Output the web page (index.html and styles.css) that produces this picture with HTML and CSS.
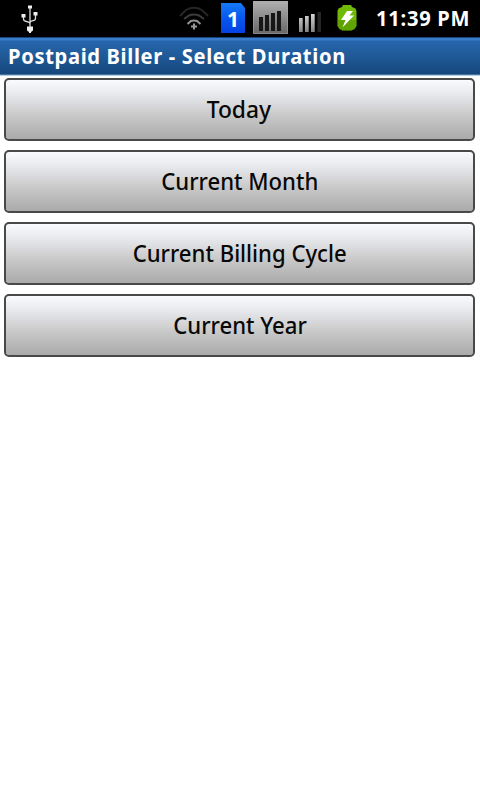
FILE: index.html
```html
<!DOCTYPE html>
<html lang="en">
<head>
<meta charset="utf-8">
<title>Postpaid Biller</title>
<link rel="stylesheet" href="styles.css">
</head>
<body>
<header class="status">
  <svg class="usb" width="18" height="28" viewBox="0 0 18 28" fill="none" stroke="#ddd" stroke-width="1.3">
    <path d="M9 2v24M2.500 11v3q0 2 3 2.500t3.500 2M14.500 9v4.200q0 2-2.500 2.500T9 17.500"/>
    <path fill="#eee" stroke="none" d="M7 .5h4v3H7zM.5 9h4v3.500h-4zM12.500 7h4v3.500h-4zM6 21.500h6v4l-2 1.500v1H8v-1l-2-1.500z"/>
  </svg>
  <svg class="wifi" width="32" height="24" viewBox="0 0 32 24" fill="none" stroke-width="2">
    <path stroke="#262626" d="M1 10L7 4Q15-.5 23 4L29 10"/>
    <path stroke="#3c3c3c" d="M5 13L10 9.500Q15 7.500 20 9.500L25 13"/>
    <path stroke="#929292" d="M8.500 18L12 15Q15 14 18 15L21.500 18"/>
    <path stroke="#999" stroke-width="2" d="M15 17.500v6M12 20.500h6"/>
  </svg>
  <div class="sim">1</div>
  <svg class="network" width="35" height="33" viewBox="0 0 35 33">
    <defs><linearGradient id="g" x2="0" y2="1"><stop stop-color="#b0b0b0"/><stop offset="1" stop-color="#666"/></linearGradient></defs>
    <path fill="url(#g)" d="M0 0h35v33H0z"/>
    <path fill="none" stroke="#aaa" stroke-opacity=".5" d="M.5.5h34v32H.5z"/>
    <path fill="#171717" d="M6 16h4v14H6zM12 14h4v16h-4zM18 12h4v18h-4zM24 10h4v20h-4z"/>
  </svg>
  <svg class="signal" width="23" height="20" viewBox="0 0 23 20">
    <defs><linearGradient id="s" gradientUnits="userSpaceOnUse" x1="0" y1="0" x2="0" y2="20"><stop stop-color="#ddd"/><stop offset="1" stop-color="#858585"/></linearGradient></defs>
    <path fill="url(#s)" d="M0 6h3.700v14H0zM6 4h3.700v16H6zM12 2h3.700v18H12z"/>
    <path fill="#262626" d="M18.500 0h3.500v20h-3.500z"/>
  </svg>
  <svg class="battery" width="20" height="26" viewBox="0 0 20 26">
    <path fill="#70ba06" d="M5 2l1-2h8l1 2 3.500 1.500L19.500 6v15l-2 3-3 1.500h-9l-3-1.500-2-3V6l1-2.500z"/>
    <path fill="#417800" d="M.5 15h19v6l-2 3-3 1.500h-9l-3-1.500-2-3z" opacity=".35"/>
    <path fill="#fff" d="M10 6h6l-3.500 4.500H17L5.500 22.500 8.500 15H4z"/>
  </svg>
  <span class="clock">11:39 PM</span>
</header>
<h1 class="title"><span>Postpaid Biller - Select Duration</span></h1>
<main class="choices">
  <button><span class="today">Today</span></button>
  <button><span>Current Month</span></button>
  <button><span>Current Billing Cycle</span></button>
  <button><span>Current Year</span></button>
</main>
</body>
</html>
```
FILE: styles.css
```css
* { box-sizing: border-box; }
body { margin: 0; width: 480px; height: 800px; overflow: hidden; background: #fff; font-family: "Noto Sans", "Open Sans", sans-serif; }
.status { height: 37px; background: #000; display: flex; align-items: flex-start; }
svg { flex: none; display: block; }
.usb { margin: 5px 0 0 21px; }
.wifi { margin: 6px 0 0 140px; }
.sim {
  width: 24px; height: 30px; margin: 3px 0 0 10px; flex: none;
  background: linear-gradient(#167af5, #0858ee 50%, #0640e4);
  clip-path: polygon(0 0, 83% 0, 100% 17%, 100% 100%, 0 100%);
  color: #fff; font: bold 21px/32px "Noto Sans", sans-serif; text-align: center;
}
.network { margin: 1px 0 0 8px; }
.signal { margin: 12px 0 0 11px; }
.battery { margin: 5px 0 0 15px; }
.clock {
  margin: 2px 0 0 19px; font-size: 22px; line-height: 30px; font-weight: 700; color: #fff;
  letter-spacing: .8px; white-space: nowrap; transform: translateY(-.5px) scaleX(.915); transform-origin: left;
}
.title {
  margin: 0; height: 39px; padding: 0 0 0 7.500px; color: #fff; font-size: 22px; line-height: 37px; font-weight: 700; white-space: nowrap;
  background: linear-gradient(#164680 0 1px, #3a7cca 1px 3px, #2666ac 4px, #205b9a 45%, #16477b 37px, #729bc4 38px, #fff 39px);
}
.title span { display: inline-block; letter-spacing: .7px; transform: translateY(-.5px) scaleX(.916); transform-origin: left; }
.choices { display: flex; flex-direction: column; gap: 9px; padding: 2px 4px; }
.choices button {
  width: 471.500px; height: 63px; margin-left: -.4px; padding: 0; border: 2px solid #494949; border-radius: 5px;
  background: linear-gradient(#fafbff, #e7e8eb 25%, #c5c5c5 65%, #aaa) padding-box;
  font: 500 24px/58px "Noto Sans", "Open Sans", sans-serif; color: #080808;
}
.choices span { display: inline-block; white-space: nowrap; transform: translate(.6px, -1.500px) scaleX(.922); }
.choices .today { transform: translateY(-1.500px) scaleX(.95); }
```
